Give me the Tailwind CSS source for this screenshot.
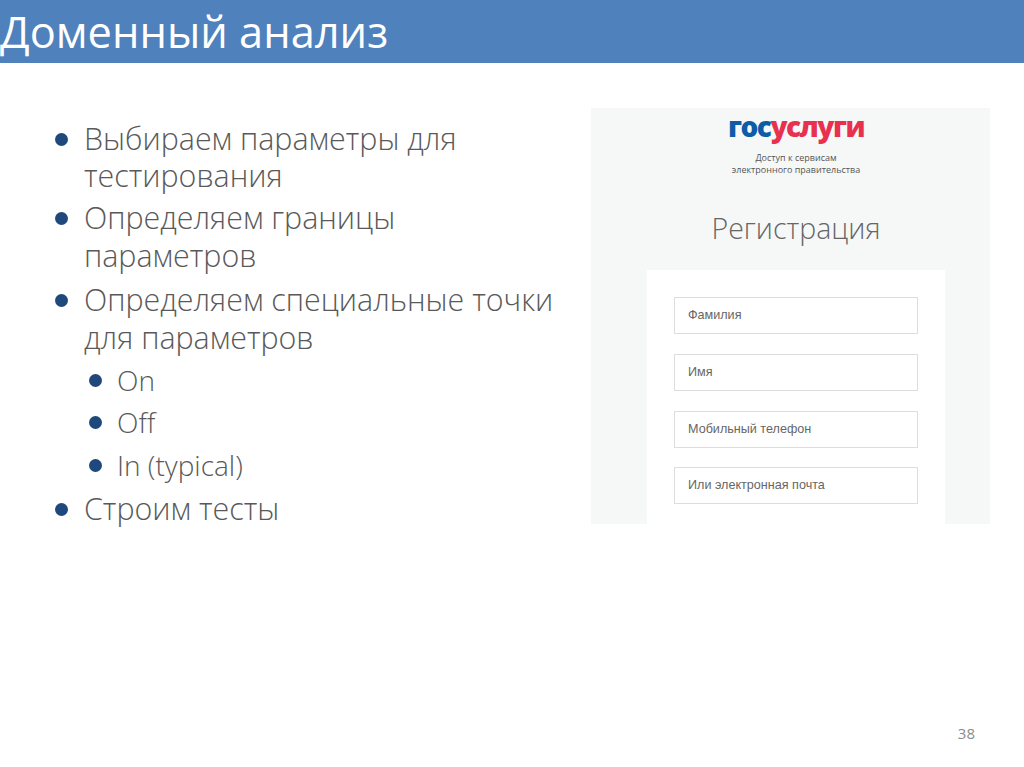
<!DOCTYPE html>
<html>
<head>
    <title>Доменный анализ</title>
    <meta charset="UTF-8">
    <script src="https://cdn.jsdelivr.net/npm/@tailwindcss/browser@4"></script>
</head>
<body class="bg-white w-[1024px] h-[767px] overflow-hidden font-['Open_Sans',sans-serif]">
<!-- Title bar -->
<div class="h-[63px] bg-[#4f81bd] flex items-center">
    <h1 class="text-[43.4px] leading-[63px] text-white font-normal whitespace-nowrap">Доменный анализ</h1>
</div>

<div class="flex h-[638px]">
    <!-- Bullets -->
    <ul class="w-[591px] pl-[55px] pt-[57px] text-[#595959] font-light text-[30.4px] leading-[38px]">
        <li class="flex leading-[37px]">
            <span class="w-[13px] h-[13px] rounded-full bg-[#1f497d] mt-[13px] mr-[16px] shrink-0"></span>
            <span>Выбираем параметры для<br>тестирования</span>
        </li>
        <li class="flex mt-[5px]">
            <span class="w-[13px] h-[13px] rounded-full bg-[#1f497d] mt-[13px] mr-[16px] shrink-0"></span>
            <span>Определяем границы<br>параметров</span>
        </li>
        <li class="flex mt-[6px]">
            <span class="w-[13px] h-[13px] rounded-full bg-[#1f497d] mt-[13px] mr-[16px] shrink-0"></span>
            <span>Определяем специальные точки<br>для параметров</span>
        </li>
        <li class="flex mt-[4px] pl-[34px] text-[28px]">
            <span class="w-[13px] h-[13px] rounded-full bg-[#1f497d] mt-[13px] mr-[15px] shrink-0"></span>
            <span>On</span>
        </li>
        <li class="flex mt-[4px] pl-[34px] text-[28px]">
            <span class="w-[13px] h-[13px] rounded-full bg-[#1f497d] mt-[13px] mr-[15px] shrink-0"></span>
            <span>Off</span>
        </li>
        <li class="flex mt-[5px] pl-[34px] text-[28px]">
            <span class="w-[13px] h-[13px] rounded-full bg-[#1f497d] mt-[13px] mr-[15px] shrink-0"></span>
            <span>In (typical)</span>
        </li>
        <li class="flex mt-[6px]">
            <span class="w-[13px] h-[13px] rounded-full bg-[#1f497d] mt-[13px] mr-[16px] shrink-0"></span>
            <span>Строим тесты</span>
        </li>
    </ul>

    <!-- Registration screenshot -->
    <div class="w-[399px] h-[416px] mt-[45px] pl-[11px] bg-[#f6f8f8] flex flex-col items-center overflow-hidden">
        <div class="h-[36px] text-[28px] leading-[36px] font-extrabold tracking-[-1.5px]"><span class="text-[#0d5ca8]">гос</span><span class="text-[#e8304f]">услуги</span></div>
        <p class="mt-[8px] text-[9px] leading-[12px] text-[#555555] text-center">Доступ к сервисам<br>электронного правительства</p>
        <p class="mt-[34px] text-[28.5px] leading-[36px] font-light text-[#666666]">Регистрация</p>
        <div class="mt-[24px] w-[298px] flex-1 bg-white px-[27px] pt-[27px] flex flex-col gap-[20px] font-['Liberation_Sans',sans-serif] text-[12.6px] text-[#666666]">
            <div class="h-[37px] shrink-0 border border-[#dddddd] flex items-center px-[13px]">Фамилия</div>
            <div class="h-[37px] shrink-0 border border-[#dddddd] flex items-center px-[13px]">Имя</div>
            <div class="h-[37px] shrink-0 border border-[#dddddd] flex items-center px-[13px]">Мобильный телефон</div>
            <div class="h-[37px] shrink-0 -mt-[1px] border border-[#dddddd] flex items-center px-[13px]">Или электронная почта</div>
        </div>
    </div>
</div>

<div class="h-[66px] flex justify-end pt-[22px] pr-[49px] text-[15px] leading-[20px] text-[#8a8a8a]">38</div>
</body>
</html>
